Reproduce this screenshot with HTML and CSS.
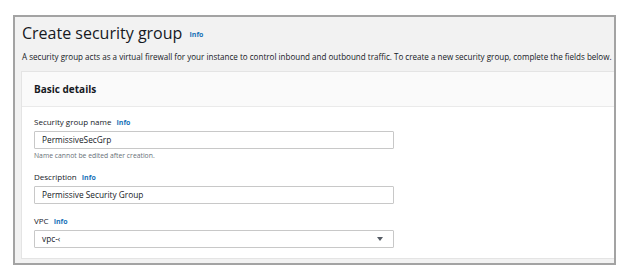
FILE: index.html
```html
<!DOCTYPE html>
<html lang="en">
<head>
    <meta charset="UTF-8">
    <title>Create security group</title>
    <link rel="stylesheet" href="styles.css">
</head>
<body>
    <div class="frame">
        <div class="page-head">
            <h1>Create security group <span class="info">Info</span></h1>
            <p class="lead">A security group acts as a virtual firewall for your instance to control inbound and outbound traffic. To create a new security group, complete the fields below.</p>
        </div>
        <div class="card">
            <div class="card-head">Basic details</div>
            <div class="card-body">
                <div class="field">
                    <label for="sg-name">Security group name <span class="info">Info</span></label>
                    <input type="text" id="sg-name" value="PermissiveSecGrp">
                    <div class="hint">Name cannot be edited after creation.</div>
                </div>
                <div class="field">
                    <label for="sg-desc">Description <span class="info">Info</span></label>
                    <input type="text" id="sg-desc" value="Permissive Security Group">
                </div>
                <div class="field">
                    <label>VPC <span class="info">Info</span></label>
                    <div class="select">
                        <span>vpc-&lsaquo;</span>
                        <span class="caret"></span>
                    </div>
                </div>
            </div>
        </div>
    </div>
</body>
</html>
```

FILE: styles.css
```css
body {
    margin: 0;
    background: white;
    font-family: 'Open Sans', sans-serif;
    color: #16191f;
}

.frame {
    margin: 15px 0 0 13px;
    width: 593px;
    height: 246px;
    border: 2px solid #a3a3a3;
    background-color: #f2f2f2;
    padding-left: 6px;
    display: flex;
    flex-direction: column;
}

.page-head {
    padding: 5px 0 0 1px;
    box-sizing: border-box;
    height: 54px;
}

.page-head h1 {
    margin: 0;
    font-size: 16px;
    font-weight: normal;
    line-height: 22px;
}

.info {
    font-size: 7px;
    font-weight: bold;
    color: #1a73b8;
    margin-left: 3px;
    vertical-align: middle;
}

.lead {
    margin: 5px 0 0;
    font-size: 8.05px;
    line-height: 12px;
    color: #16191f;
    white-space: nowrap;
}

.card {
    background: white;
    border: 1px solid #e4e4e4;
    border-right: none;
    height: 188px;
    box-sizing: border-box;
}

.card-head {
    height: 35px;
    background-color: #fafafa;
    border-bottom: 1px solid #eaeaea;
    box-sizing: border-box;
    padding: 10px 12px 0;
    font-size: 10px;
    font-weight: bold;
    line-height: 14px;
}

.card-body {
    padding: 9px 12px 0;
}

.field {
    margin-bottom: 10px;
}

.field:last-child {
    margin-top: 11px;
}

.field label {
    display: block;
    font-size: 8px;
    line-height: 12px;
    margin-bottom: 2px;
    color: #16191f;
}

.field input,
.select {
    display: flex;
    align-items: center;
    justify-content: space-between;
    width: 360px;
    height: 18px;
    box-sizing: border-box;
    border: 1px solid #c8c8c8;
    border-radius: 1px;
    padding: 0 7px;
    font-family: 'Open Sans', sans-serif;
    font-size: 8.3px;
    color: #16191f;
    background: white;
    margin: 0;
}

.hint {
    font-size: 6.8px;
    color: #687078;
    margin-top: 1px;
    line-height: 11px;
}

.caret {
    width: 0;
    height: 0;
    border-left: 3px solid transparent;
    border-right: 3px solid transparent;
    border-top: 4px solid #545b64;
    margin-right: 3px;
}
```
